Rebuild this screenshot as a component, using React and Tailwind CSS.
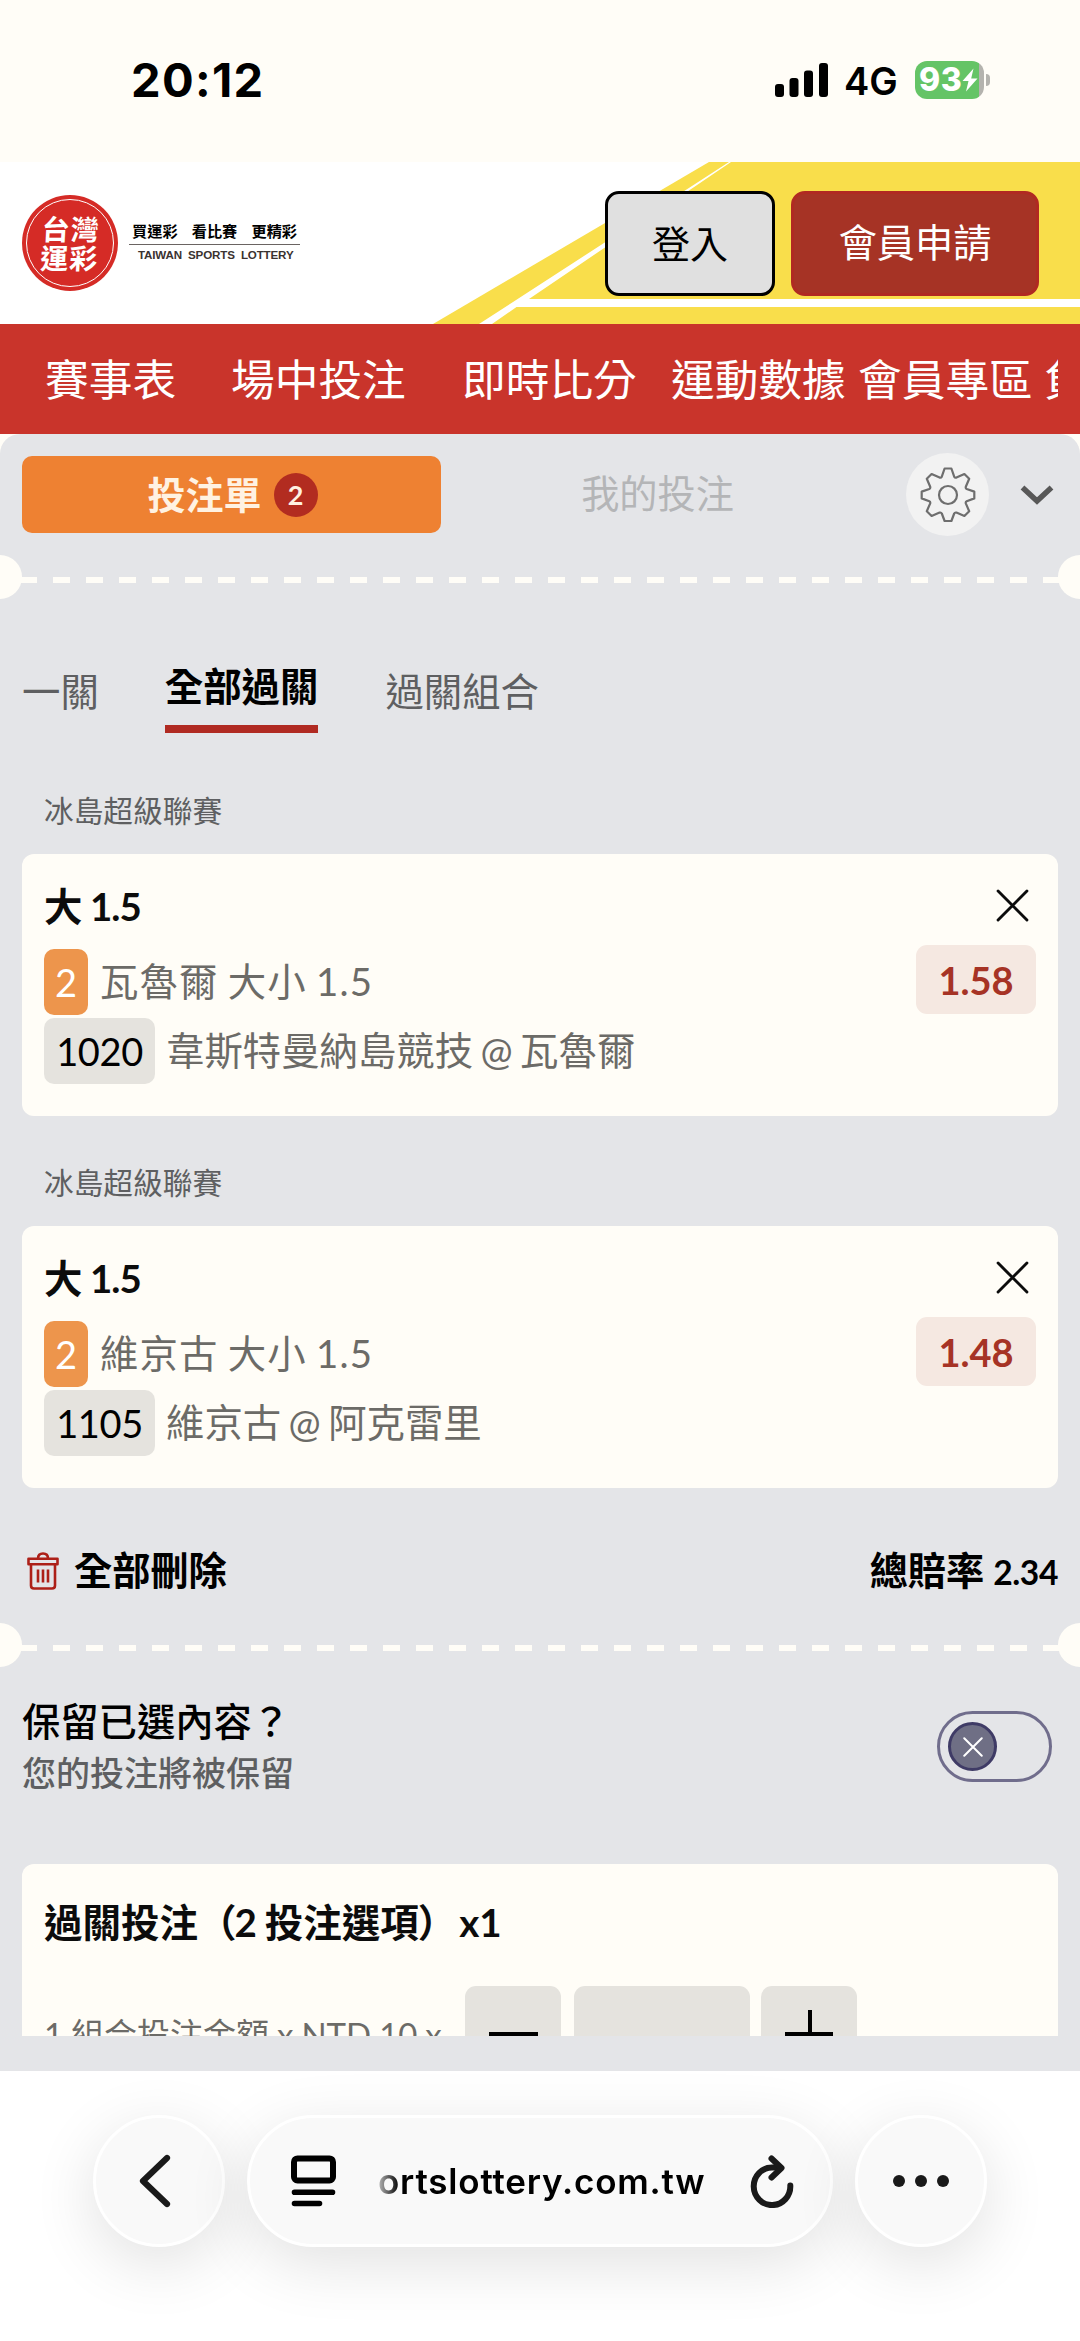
import React from 'react';

const CROSS = 'M2 2L30 30M30 2L2 30';

function StatusBar() {
  return (
    <div className="flex h-[162px] items-start justify-between bg-[#fffdf7] pl-[131px] pr-[90px] pt-[54px] font-['Inter','Noto_Sans_CJK_TC',sans-serif] text-black">
      <div className="text-[47px] font-bold leading-[52px] tracking-[1.3px]">20:12</div>
      <div className="flex h-[52px] items-center">
        <svg className="h-[34px] w-[53px]" viewBox="0 0 53 34">
          <rect x="0" y="21" width="9" height="13" rx="3" />
          <rect x="14.5" y="15" width="9" height="19" rx="3" />
          <rect x="29" y="7.5" width="9" height="26.5" rx="3" />
          <rect x="44" y="0" width="9" height="34" rx="3" />
        </svg>
        <div className="ml-4 w-[54px] whitespace-nowrap pt-[2px] text-[38px] font-semibold leading-[52px]">4G</div>
        <div className="ml-[17px] flex items-center">
          <div className="flex h-[38px] w-[69px] items-center rounded-[12px] bg-[linear-gradient(90deg,#65c466_64.5px,#b4b3ae_64.5px)] pl-[4px]">
            <span className="text-[32px] font-extrabold leading-[38px] tracking-[0.5px] text-white">93</span>
            <svg className="h-[24px] w-[16px]" viewBox="0 0 16 24" fill="#fff">
              <path d="M11.5 0.5L0.5 13h6L4 23.5 15.5 10.5H9.2z" />
            </svg>
          </div>
          <div className="ml-[2px] h-[12px] w-[4px] rounded-r-full bg-[#b4b3ae]" />
        </div>
      </div>
    </div>
  );
}

function Logo() {
  return (
    <div className="flex items-center">
      <div className="grid size-[96px] place-items-center rounded-full bg-[#d52b26] p-[4px]">
        <div className="grid size-[88px] place-items-center rounded-full border-[1.5px] border-white">
          <div className="-skew-x-3 text-center text-[28px] font-bold leading-[28.5px] tracking-[1px] text-white">
            <div>台灣</div>
            <div>運彩</div>
          </div>
        </div>
      </div>
      <div className="ml-[11px] w-[171px] -translate-y-[2px]">
        <div className="flex justify-between pl-[3px] pr-[3px] text-[15.2px] font-bold leading-[22px] text-black">
          <span>買運彩</span>
          <span>看比賽</span>
          <span>更精彩</span>
        </div>
        <div className="mt-[2px] h-[1.5px] bg-[#6a6462]" />
        <div className="mt-[3px] whitespace-nowrap pl-[9px] font-['Liberation_Sans',sans-serif] text-[11.6px] font-bold leading-[14px] tracking-[-0.15px] text-[#3a3230] [word-spacing:3px]">TAIWAN SPORTS LOTTERY</div>
      </div>
    </div>
  );
}

function Header() {
  return (
    <header className="relative h-[162px] bg-white">
      <svg className="absolute inset-0 h-[162px] w-[1080px]" viewBox="0 0 1080 162">
        <path d="M709 0H1080V162H433z" fill="#f9de4b" />
        <path d="M729 0H731L529 137H1080V145H516.5L492 162H479z" fill="#fff" />
      </svg>
      <div className="relative flex h-full items-center justify-between pl-[22px] pr-[41px]">
        <Logo />
        <div className="flex gap-4">
          <button className="h-[105px] w-[170px] rounded-[14px] border-[3px] border-black bg-[#e0e0e0] text-[38px] text-black">登入</button>
          <button className="h-[105px] w-[248px] rounded-[14px] border-[3px] border-[#b02a22] bg-[#a63325] text-[38.2px] text-white">會員申請</button>
        </div>
      </div>
    </header>
  );
}

function Nav() {
  return (
    <nav className="h-[110px] bg-[#c9342b] pl-[45px] pr-[22px]">
      <div className="flex h-full items-center overflow-hidden whitespace-nowrap pt-[1px] text-[43.7px] text-white">
        <span className="w-[186px] shrink-0">賽事表</span>
        <span className="w-[231px] shrink-0">場中投注</span>
        <span className="w-[209px] shrink-0">即時比分</span>
        <span className="w-[187px] shrink-0">運動數據</span>
        <span className="w-[186px] shrink-0">會員專區</span>
        <span className="shrink-0">負責任博彩</span>
      </div>
    </nav>
  );
}

function Perforation() {
  return (
    <div className="flex h-[44px] items-center overflow-hidden">
      <div className="-ml-[22px] size-[44px] shrink-0 rounded-full bg-[#fffdf7]" />
      <div className="-mx-[2px] mt-[6px] h-[6px] grow bg-[repeating-linear-gradient(90deg,#fffdf7_0_17px,transparent_17px_33px)]" />
      <div className="-mr-[22px] size-[44px] shrink-0 rounded-full bg-[#fffdf7]" />
    </div>
  );
}

function Gear() {
  return (
    <svg className="size-[56px]" viewBox="0 0 56 56" fill="none" stroke="#6e6e6e" strokeWidth="2.2" strokeLinejoin="round">
      <path d="M24.6 1.5h6.8l2.8 8.2q.7 1.3 2.2.9l8-3.6 4.8 4.8-3.4 8q-.4 1.5.9 2.2l7.6 2.6v6.8l-7.6 2.8q-1.3.7-.9 2.2l3.4 7.8-4.8 4.8-8-3.4q-1.5-.4-2.2.9l-2.8 7.5h-6.8l-2.8-7.5q-.7-1.3-2.2-.9l-8 3.4-4.8-4.8 3.4-7.8q.4-1.5-.9-2.2l-7.6-2.8v-6.8l7.6-2.6q1.3-.7.9-2.2l-3.4-8 4.8-4.8 8 3.6q1.5.4 2.2-.9z" />
      <circle cx="28" cy="28" r="9" />
    </svg>
  );
}

function SlipTabs() {
  return (
    <div className="flex h-[121px] items-center pb-0 pl-[22px] pr-[26px]">
      <div className="flex h-[77px] w-[419px] items-center justify-center gap-[12px] rounded-[10px] bg-[#ee8132] pl-[2px] text-[38px] font-bold text-[#fff2e2]">
        <span className="pb-[1px]">投注單</span>
        <span className="grid size-[44px] place-items-center rounded-full bg-[#b22c20] text-[27px] leading-none text-[#fff2e2]">2</span>
      </div>
      <div className="grow pb-[1px] pr-[32px] text-center text-[38.2px] text-[#b4b5b7]">我的投注</div>
      <div className="grid size-[83px] place-items-center rounded-full bg-[#f2f2f2]">
        <Gear />
      </div>
      <svg className="ml-[31px] h-[20px] w-[34px]" viewBox="0 0 34 20" fill="none" stroke="#585858" strokeWidth="5.5">
        <path d="M2.5 2.5L17 16L31.5 2.5" />
      </svg>
    </div>
  );
}

function ModeTabs() {
  return (
    <div className="flex h-[134px] items-end pl-[22px] text-[38.4px] leading-[56px] text-[#5e5f61]">
      <span className="mb-[14px]">一關</span>
      <span className="ml-[66px] border-b-[8px] border-[#b02a22] pb-[11px] font-bold text-black">全部過關</span>
      <span className="mb-[14px] ml-[67px]">過關組合</span>
    </div>
  );
}

function BetCard({ market, code, match, odds }) {
  return (
    <section className="mx-[22px]">
      <div className="h-[86px] pl-[22px] pt-[23px] text-[29.7px] leading-[40px] text-[#5e5f61]">冰島超級聯賽</div>
      <div className="flex h-[262px] justify-between rounded-[12px] bg-[#fffdf7] pl-[22px] pr-[22px]">
        <div>
          <div className="mt-[26px] h-[69px] whitespace-nowrap text-[38.4px] font-bold leading-[52px] tracking-[-0.9px] text-[#0c0c0c]">大 1.5</div>
          <div className="flex h-[66px] items-center">
            <span className="grid h-[66px] w-[44px] place-items-center rounded-[10px] bg-[#ed954c] text-[38px] leading-[66px] text-white">2</span>
            <span className="ml-[12px] whitespace-nowrap text-[38.4px] tracking-[1.1px] text-[#6c6b67] [word-spacing:-1.6px]">{market}</span>
          </div>
          <div className="mt-[3px] flex h-[66px] items-center">
            <span className="grid h-[66px] w-[111px] place-items-center rounded-[10px] bg-[#e5e3de] text-[38px] leading-[66px] tracking-[-0.4px] text-black">{code}</span>
            <span className="ml-[11px] whitespace-nowrap text-[38.4px] text-[#6c6b67] [word-spacing:-2.4px]">{match}</span>
          </div>
        </div>
        <div className="flex flex-col items-end">
          <svg className="mr-[7px] mt-[35px] size-[33px]" viewBox="0 0 32 32" fill="none" stroke="#0c0c0c" strokeWidth="2.8" strokeLinecap="round">
            <path d={CROSS} />
          </svg>
          <div className="mt-[23px] grid h-[69px] w-[120px] place-items-center rounded-[11px] bg-[#f5e8e1] pt-[2px] text-[38px] font-bold leading-[67px] text-[#a63325]">{odds}</div>
        </div>
      </div>
    </section>
  );
}

function Totals() {
  return (
    <div className="flex h-[135px] items-center justify-between pl-[27px] pr-[22px] pt-[31px] text-[38.2px] font-bold text-black">
      <div className="flex items-center">
        <svg className="h-[38px] w-[32px]" viewBox="0 0 32 38" fill="none" stroke="#ad2018" strokeWidth="2.6" strokeLinejoin="round">
          <path d="M1.5 6.8h29v5.4h-29zM11 6.5q0-5 5-5t5 5M4 12.5v21q0 3 3 3h18q3 0 3-3v-21M11 17.5v13M16 17.5v13M21 17.5v13" />
        </svg>
        <span className="ml-[15px]">全部刪除</span>
      </div>
      <div className="flex items-center">
        <span>總賠率</span>
        <span className="ml-[9px] pt-[2px] text-[33.6px] tracking-[-0.4px]">2.34</span>
      </div>
    </div>
  );
}

function KeepSelection() {
  return (
    <div className="flex h-[197px] justify-between pl-[22px] pr-[28px] pt-[27px]">
      <div>
        <div className="text-[38.3px] font-medium leading-[54px] text-black">保留已選內容？</div>
        <div className="mt-[1px] text-[34px] font-medium leading-[48px] text-[#5e5f61]">您的投注將被保留</div>
      </div>
      <div className="mt-[17px] flex h-[71px] w-[115px] items-center rounded-full border-[3px] border-[#706d8c] pl-[8px]">
        <div className="grid size-[49px] place-items-center rounded-full border-[3px] border-[#3f3b66] bg-[#6f6f85]">
          <svg className="size-[20px]" viewBox="0 0 32 32" fill="none" stroke="#fff" strokeWidth="3.2" strokeLinecap="round">
            <path d={CROSS} />
          </svg>
        </div>
      </div>
    </div>
  );
}

function StakeCard() {
  return (
    <div className="mx-[22px] h-[172px] overflow-hidden rounded-t-[12px] bg-[#fffdf7] pl-[22px]">
      <div className="mt-[30px] h-[92px] whitespace-nowrap text-[38.5px] font-bold leading-[56px] text-[#0c0c0c]">
        過關投注（<span className="-ml-[2px] mr-[-1px] [word-spacing:-1.5px]">2 投注選項</span>）<span className="ml-[3px]">x1</span>
      </div>
      <div className="flex h-[96px] items-center whitespace-nowrap">
        <div className="w-[421px] pt-[2px] text-[33px] text-[#6c6b67] [word-spacing:-0.5px]">1 組合投注金額 x NTD 10 x</div>
        <div className="grid h-[96px] w-[96px] place-items-center rounded-[11px] bg-[#e5e3de]">
          <div className="h-[4px] w-[49px] bg-black" />
        </div>
        <div className="ml-[13px] h-[96px] w-[176px] rounded-[11px] bg-[#e5e3de]" />
        <div className="ml-[11px] grid h-[96px] w-[96px] place-items-center rounded-[11px] bg-[#e5e3de]">
          <svg className="size-[48px]" viewBox="0 0 48 48" stroke="#000" strokeWidth="4">
            <path d="M25 0v48M0 24h48" />
          </svg>
        </div>
      </div>
    </div>
  );
}

function BrowserBar() {
  return (
    <div className="flex h-[270px] items-start bg-white pl-[93px] pt-[44px]">
      <div className="grid size-[132px] place-items-center rounded-full border-[3px] border-white bg-[#f9f9f9] shadow-[0_16px_64px_rgba(0,0,0,0.12)]">
        <svg className="-ml-[9px] h-[54px] w-[34px]" viewBox="0 0 34 54" fill="none" stroke="#1a1a1a" strokeWidth="6.2" strokeLinecap="round" strokeLinejoin="round">
          <path d="M29 4L5 27L29 50" />
        </svg>
      </div>
      <div className="ml-[22px] flex h-[132px] w-[586px] items-center rounded-full border-[3px] border-white bg-[#f9f9f9] pl-[41px] shadow-[0_16px_64px_rgba(0,0,0,0.12)]">
        <svg className="h-[52px] w-[45px]" viewBox="0 0 45 52" fill="none" stroke="#000" strokeWidth="6" strokeLinecap="round">
          <rect x="3" y="3.4" width="39" height="22" rx="3.5" />
          <path d="M3.5 37.2h38M3.5 48.5h25" strokeWidth="5.6" />
        </svg>
        <div className="ml-[35px] w-[336px] whitespace-nowrap bg-[linear-gradient(90deg,transparent_0,#000_28px)] bg-clip-text pl-[7px] font-['Inter',sans-serif] text-[35px] font-semibold leading-[48px] tracking-[0.8px] text-transparent">ortslottery.com.tw</div>
        <svg className="ml-[42px] h-[54px] w-[46px]" viewBox="0 0 46 54" fill="none" stroke="#1a1a1a" strokeWidth="6" strokeLinecap="round" strokeLinejoin="round">
          <path d="M41.3 31.5A18.3 18.8 0 1 1 23 13.5H31" />
          <path d="M22.5 4.5L32.5 14L22.5 23.5" />
        </svg>
      </div>
      <div className="ml-[22px] flex size-[132px] items-center justify-center gap-[10px] rounded-full border-[3px] border-white bg-[#f9f9f9] shadow-[0_16px_64px_rgba(0,0,0,0.12)]">
        <i className="size-[12px] rounded-full bg-[#1a1a1a]" />
        <i className="size-[12px] rounded-full bg-[#1a1a1a]" />
        <i className="size-[12px] rounded-full bg-[#1a1a1a]" />
      </div>
    </div>
  );
}

export default function App() {
  return (
    <div className="h-[2341px] w-[1080px] overflow-hidden bg-[#fffdf7] font-['Lato','Noto_Sans_CJK_TC',sans-serif]">
      <StatusBar />
      <Header />
      <Nav />
      <main className="h-[1637px] rounded-t-[20px] bg-[#e4e5e8]">
        <SlipTabs />
        <Perforation />
        <ModeTabs />
        <div className="flex flex-col gap-[24px] pt-[35px]">
          <BetCard market="瓦魯爾 大小 1.5" code="1020" match="韋斯特曼納島競技 @ 瓦魯爾" odds="1.58" />
          <BetCard market="維京古 大小 1.5" code="1105" match="維京古 @ 阿克雷里" odds="1.48" />
        </div>
        <Totals />
        <Perforation />
        <KeepSelection />
        <StakeCard />
      </main>
      <BrowserBar />
    </div>
  );
}
